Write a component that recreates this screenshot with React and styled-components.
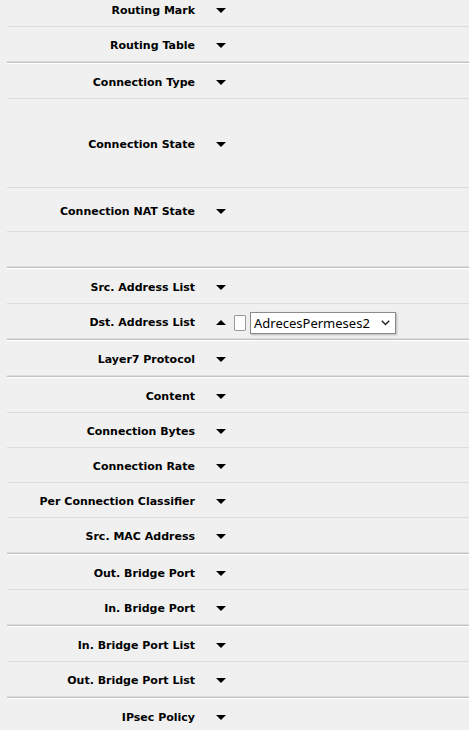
import React from "react";
import styled, { createGlobalStyle } from "styled-components";

const Global = createGlobalStyle`
  html, body { margin: 0; padding: 0; background: #f0f0f0; overflow: hidden; }
  body { font-family: "DejaVu Sans", Verdana, sans-serif; }
`;

const Form = styled.div`
  margin-top: -8px;
  margin-left: 7px;
  display: flex;
  flex-direction: column;
`;

const Row = styled.div`
  box-sizing: border-box;
  height: ${(p) => p.$h || 35}px;
  border-bottom: 1px solid #dcdcdc;
  display: flex;
  align-items: center;
  padding-top: 3px;
`;

const Sep = styled.div`
  box-sizing: border-box;
  height: 2px;
  border-top: 1px solid #c2c2c2;
  border-bottom: 1px solid #ffffff;
`;

const Label = styled.div`
  width: 188px;
  flex: none;
  text-align: right;
  font-size: 11px;
  font-weight: bold;
  color: #000;
  white-space: nowrap;
`;

const Toggle = styled.span`
  display: inline-flex;
  margin-left: 21px;
  width: 10px;
  height: 6px;
  align-items: center;
`;

const Check = styled.span`
  box-sizing: border-box;
  margin-left: 8px;
  width: 12px;
  height: 16px;
  background: #fff;
  border: 1px solid #9a9a9a;
  border-radius: 1px;
`;

const Select = styled.div`
  box-sizing: border-box;
  margin-left: 4px;
  width: 146px;
  height: 22px;
  background: #fff;
  border: 1px solid #8c8c8c;
  box-shadow: 1px 1px 2px rgba(0, 0, 0, 0.25);
  display: flex;
  align-items: center;
  justify-content: space-between;
  padding: 0 5px 0 3px;
  font-family: "Noto Sans", "Open Sans", sans-serif;
  font-size: 13px;
  color: #000;
`;

const Arrow = ({ up }) => (
  <Toggle>
    <svg width="10" height="5" viewBox="0 0 10 5">
      {up ? <polygon points="0,5 10,5 5,0" fill="#000" /> : <polygon points="0,0 10,0 5,5" fill="#000" />}
    </svg>
  </Toggle>
);

const Chevron = () => (
  <svg width="9" height="6" viewBox="0 0 9 6">
    <polyline points="0.8,0.8 4.5,4.6 8.2,0.8" fill="none" stroke="#222" strokeWidth="1.4" />
  </svg>
);

const Field = ({ label, h }) => (
  <Row $h={h}>
    <Label>{label}</Label>
    <Arrow />
  </Row>
);

export default function App() {
  return (
    <>
      <Global />
      <Form>
        <Field label="Routing Mark" />
        <Field label="Routing Table" />
        <Sep />
        <Field label="Connection Type" />
        <Field label="Connection State" h={89} />
        <Field label="Connection NAT State" h={44} />
        <Row />
        <Sep />
        <Field label="Src. Address List" />
        <Row>
          <Label>Dst. Address List</Label>
          <Arrow up />
          <Check />
          <Select>
            <span>AdrecesPermeses2</span>
            <Chevron />
          </Select>
        </Row>
        <Sep />
        <Field label="Layer7 Protocol" />
        <Sep />
        <Field label="Content" />
        <Field label="Connection Bytes" />
        <Field label="Connection Rate" />
        <Field label="Per Connection Classifier" />
        <Field label="Src. MAC Address" />
        <Sep />
        <Field label="Out. Bridge Port" />
        <Field label="In. Bridge Port" />
        <Sep />
        <Field label="In. Bridge Port List" />
        <Field label="Out. Bridge Port List" />
        <Sep />
        <Field label="IPsec Policy" />
      </Form>
    </>
  );
}
